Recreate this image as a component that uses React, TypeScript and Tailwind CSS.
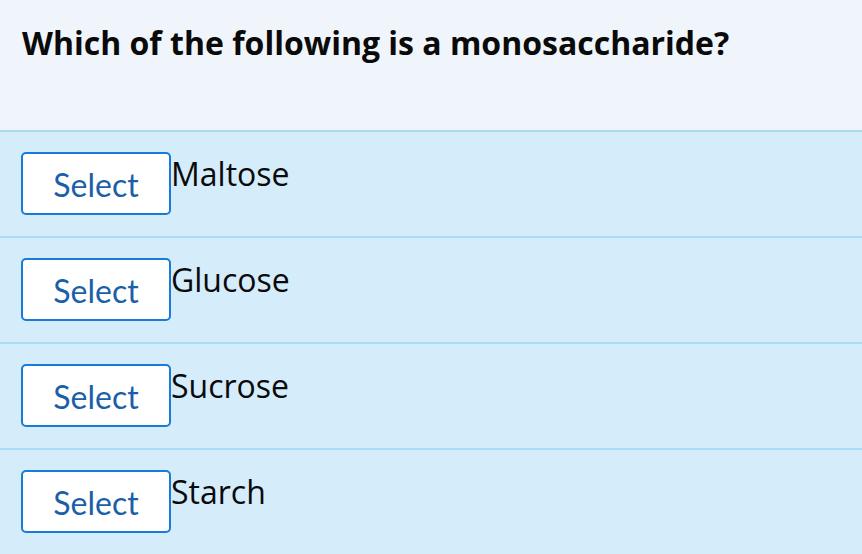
import React from "react";

const options = ["Maltose", "Glucose", "Sucrose", "Starch"];

export default function App() {
  return (
    <div className="w-full min-h-[554px] bg-[#d5ecfa]">
      <div className="h-[130px] bg-[#eff5fa] px-[22px] pt-[21px]">
        <h1
          className="text-[32px] font-bold text-[#0a0a0a] leading-[44px]"
          style={{ fontFamily: '"Open Sans", "Noto Sans", sans-serif' }}
        >
          Which of the following is a monosaccharide?
        </h1>
      </div>
      {options.map((o) => (
        <div
          key={o}
          className="h-[106px] border-t-2 border-[#a8dbf7] bg-[#d5ecfa] flex items-start pt-5 pl-[21px]"
        >
          <button
            className="w-[150px] h-[63px] shrink-0 bg-white border-2 border-[#1a7ad9] rounded-[5px] flex items-center justify-center text-[32px] text-[#1a5fa8] leading-none"
            style={{ fontFamily: 'Lato, "Open Sans", sans-serif' }}
          >
            <span className="pt-[2px]">Select</span>
          </button>
          <span
            className="text-[32px] text-[#0a0a0a] leading-[43px]"
            style={{ fontFamily: '"Open Sans", "Noto Sans", sans-serif' }}
          >
            {o}
          </span>
        </div>
      ))}
    </div>
  );
}
